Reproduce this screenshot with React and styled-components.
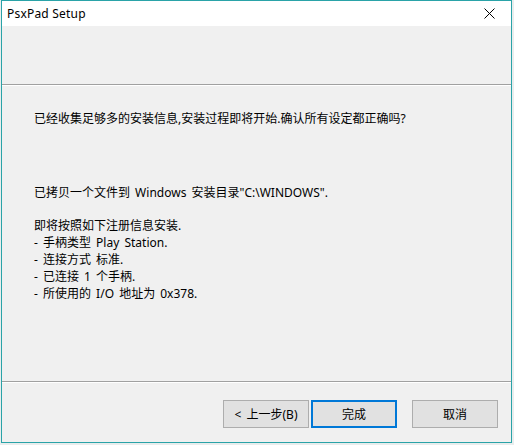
import styled, { createGlobalStyle } from "styled-components";

const GlobalStyle = createGlobalStyle`
  html, body {
    margin: 0;
    padding: 0;
    background: #e9eded;
  }
  body {
    font-family: "Noto Sans", "Noto Sans CJK SC", sans-serif;
    font-size: 12px;
    color: #000;
  }
`;

const Window = styled.div`
  box-sizing: border-box;
  width: 511px;
  height: 443px;
  margin-left: 1px;
  border: 1px solid #2aa3a8;
  background: #f0f0f0;
  display: flex;
  flex-direction: column;
`;

const TitleBar = styled.div`
  height: 25px;
  flex: none;
  background: #fff;
  display: flex;
  align-items: center;
  justify-content: space-between;
  padding: 0 8px 0 5px;
`;

const Title = styled.span`
  font-family: "Noto Sans", "Liberation Sans", sans-serif;
  font-size: 12px;
  color: #000;
  letter-spacing: 0.2px;
`;

const CloseBtn = styled.div`
  width: 30px;
  height: 25px;
  display: flex;
  align-items: center;
  justify-content: center;
  margin-right: -1px;
`;

const Header = styled.div`
  height: 58px;
  flex: none;
  background: #f0f0f0;
`;

const Etched = styled.div`
  height: 1px;
  flex: none;
  background: #a0a0a0;
  border-bottom: 1px solid #fff;
`;

const Content = styled.div`
  flex: 1;
  padding: 24px 0 0 32px;
  line-height: 17px;
  word-spacing: 2px;
`;

const Para = styled.p`
  margin: 0 0 ${(p) => p.$gap || 0}px;
  white-space: pre;
`;

const Footer = styled.div`
  height: 59px;
  flex: none;
  display: flex;
  align-items: flex-start;
  justify-content: flex-end;
  padding: 17px 13px 0 0;
  box-sizing: border-box;
`;

const Button = styled.button`
  box-sizing: border-box;
  width: 86px;
  height: 28px;
  margin-left: ${(p) => p.$ml || 0}px;
  background: #e1e1e1;
  border: ${(p) => (p.$primary ? "2px solid #0078d7" : "1px solid #adadad")};
  font-family: "Noto Sans", "Noto Sans CJK SC", sans-serif;
  font-size: 12px;
  word-spacing: 2px;
  color: #000;
  padding: 0;
  display: flex;
  align-items: center;
  justify-content: center;
`;

export default function App() {
  return (
    <>
      <GlobalStyle />
      <Window>
        <TitleBar>
          <Title>PsxPad Setup</Title>
          <CloseBtn>
            <svg width="11" height="11" viewBox="0 0 11 11">
              <path d="M0.5 0.5 L10.5 10.5 M10.5 0.5 L0.5 10.5" stroke="#000" strokeWidth="1" fill="none" />
            </svg>
          </CloseBtn>
        </TitleBar>
        <Header />
        <Etched />
        <Content>
          <Para $gap={57}>已经收集足够多的安装信息,安装过程即将开始.确认所有设定都正确吗?</Para>
          <Para $gap={16}>已拷贝一个文件到 Windows 安装目录"C:\WINDOWS".</Para>
          <Para>即将按照如下注册信息安装.</Para>
          <Para>- 手柄类型 Play Station.</Para>
          <Para>- 连接方式 标准.</Para>
          <Para>- 已连接 1 个手柄.</Para>
          <Para>- 所使用的 I/O 地址为 0x378.</Para>
        </Content>
        <Etched />
        <Footer>
          <Button>&lt; 上一步(B)</Button>
          <Button $primary $ml={2}>完成</Button>
          <Button $ml={15}>取消</Button>
        </Footer>
      </Window>
    </>
  );
}
